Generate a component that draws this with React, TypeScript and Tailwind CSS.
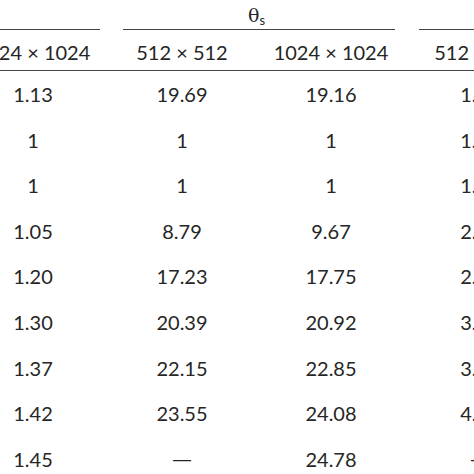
const rows: string[][] = [
  ["1.13", "19.69", "19.16", "1.21"],
  ["1", "1", "1", "1.00"],
  ["1", "1", "1", "1.00"],
  ["1.05", "8.79", "9.67", "2.11"],
  ["1.20", "17.23", "17.75", "2.84"],
  ["1.30", "20.39", "20.92", "3.26"],
  ["1.37", "22.15", "22.85", "3.59"],
  ["1.42", "23.55", "24.08", "4.02"],
  ["1.45", "—", "24.78", "—"],
];

const sizes = ["1024 × 1024", "512 × 512", "1024 × 1024", "512 × 512"];

function Cell({ children }: { children: React.ReactNode }) {
  return <div className="flex w-[149px] shrink-0 items-center justify-center">{children}</div>;
}

export default function App() {
  return (
    <div
      className="h-[474px] w-[474px] overflow-hidden bg-white text-[20px] leading-none text-[#262626]"
      style={{ fontFamily: "Lato, 'Open Sans', sans-serif" }}
    >
      <div className="ml-[-41.5px] w-[600px]">
        <div className="flex h-[29px] items-center">
          <Cell>{""}</Cell>
          <div className="flex w-[298px] shrink-0 items-center justify-center pt-[1px]">
            <span style={{ fontFamily: "'DejaVu Serif', serif" }} className="text-[19px]">
              θ<sub className="text-[13px]" style={{ fontFamily: "Lato, sans-serif" }}>s</sub>
            </span>
          </div>
        </div>
        <div className="flex h-[1px]">
          <div className="ml-0 mr-[6.5px] w-[142.5px] bg-[#444]" />
          <div className="ml-[16.5px] mr-[8.5px] w-[273px] bg-[#444]" />
          <div className="ml-[15.5px] w-[140px] bg-[#444]" />
        </div>
        <div className="flex h-[40px] items-center pt-[3px]">
          {sizes.map((s, i) => (
            <Cell key={i}>{s}</Cell>
          ))}
        </div>
        <div className="h-[1.3px] w-full bg-[#444]" />
        <div>
          {rows.map((r, i) => (
            <div key={i} className="flex h-[45.6px] items-center">
              {r.map((v, j) => (
                <Cell key={j}>
                  {v === "—" ? <span style={{ fontFamily: "'DejaVu Sans', sans-serif" }}>—</span> : v}
                </Cell>
              ))}
            </div>
          ))}
        </div>
      </div>
    </div>
  );
}
